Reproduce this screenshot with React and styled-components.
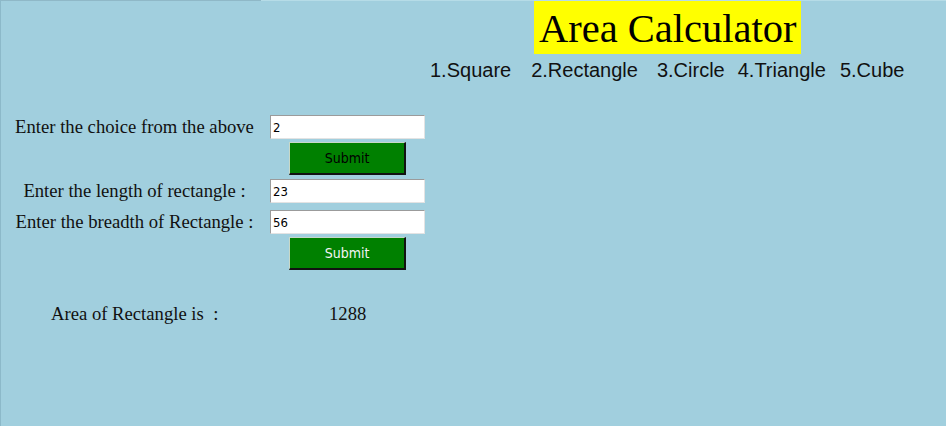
import React from "react";
import styled, { createGlobalStyle } from "styled-components";

const GlobalStyle = createGlobalStyle`
  html, body {
    margin: 0;
    padding: 0;
  }
  body {
    font-family: "Liberation Serif", "Times New Roman", serif;
    background: #a1cfde;
  }
`;

const Page = styled.div`
  min-height: 100vh;
  box-sizing: border-box;
  border-left: 1px solid #8cb9c9;
  background:
    linear-gradient(to right, #8fb8c7 260px, #b6dce7 260px) top left / 100% 1px no-repeat,
    #a1cfde;
  padding-top: 1px;
`;

const Header = styled.header`
  display: flex;
  flex-direction: column;
`;

const Title = styled.h1`
  align-self: flex-start;
  margin: 0 0 0 533px;
  padding: 0 4px 0 5px;
  height: 53px;
  line-height: 55px;
  background: #ffff00;
  color: #000;
  font-family: "Liberation Serif", "Times New Roman", serif;
  font-weight: normal;
  font-size: 40.5px;
`;

const Menu = styled.div`
  display: flex;
  margin: 5px 0 0 429px;
  font-family: "Liberation Sans", Arial, sans-serif;
  font-size: 20px;
  line-height: 23px;
  color: #111;
`;

const MenuItem = styled.span`
  margin-right: ${(p) => p.$gap || 0}px;
  white-space: nowrap;
`;

const Form = styled.form`
  display: flex;
  flex-direction: column;
  margin-top: 33px;
  padding-left: 6px;
`;

const Row = styled.div`
  display: grid;
  grid-template-columns: 255px 155px;
  column-gap: 8px;
  align-items: center;
  margin-top: ${(p) => p.$mt || 0}px;
`;

const Label = styled.label`
  text-align: center;
  font-size: 18.67px;
  color: #111;
  white-space: pre;
`;

const Input = styled.input`
  grid-column: 2;
  box-sizing: border-box;
  width: 155px;
  height: 24px;
  margin: 0;
  padding: 0 2px;
  background: #fff;
  border-style: solid;
  border-width: 1px;
  border-color: #9b9b9b #e3e3e3 #e3e3e3 #9b9b9b;
  font-family: "DejaVu Sans Condensed", "DejaVu Sans", sans-serif;
  font-size: 13px;
  color: #000;
  outline: none;
`;

const Button = styled.button`
  grid-column: 2;
  justify-self: start;
  box-sizing: border-box;
  width: 117px;
  height: 33px;
  margin: 0 0 0 19px;
  padding: 0;
  background: #008000;
  border-style: solid;
  border-width: 1px 2px 2px 1px;
  border-color: #c8d8c8 #111 #111 #c8d8c8;
  color: ${(p) => (p.$light ? "#f4f4f4" : "#000")};
  font-family: "DejaVu Sans Condensed", "DejaVu Sans", sans-serif;
  font-size: 14px;
  cursor: pointer;
`;

const Result = styled.div`
  display: flex;
  margin: 33px 0 0 50px;
  font-size: 18.67px;
  line-height: 21px;
  color: #111;
`;

const ResultLabel = styled.span`
  width: 278px;
  white-space: pre;
`;

const menu = [
  { text: "1.Square", gap: 20 },
  { text: "2.Rectangle", gap: 19 },
  { text: "3.Circle", gap: 13 },
  { text: "4.Triangle", gap: 14 },
  { text: "5.Cube", gap: 0 },
];

export default function App() {
  return (
    <Page>
      <GlobalStyle />
      <Header>
        <Title>Area Calculator</Title>
        <Menu>
          {menu.map((m) => (
            <MenuItem key={m.text} $gap={m.gap}>
              {m.text}
            </MenuItem>
          ))}
        </Menu>
      </Header>
      <Form onSubmit={(e) => e.preventDefault()}>
        <Row>
          <Label>Enter the choice from the above</Label>
          <Input type="text" defaultValue="2" />
        </Row>
        <Row $mt={3}>
          <Button type="submit">Submit</Button>
        </Row>
        <Row $mt={4}>
          <Label>Enter the length of rectangle :</Label>
          <Input type="text" defaultValue="23" />
        </Row>
        <Row $mt={7}>
          <Label>Enter the breadth of Rectangle :</Label>
          <Input type="text" defaultValue="56" />
        </Row>
        <Row $mt={3}>
          <Button type="submit" $light>
            Submit
          </Button>
        </Row>
      </Form>
      <Result>
        <ResultLabel>Area of Rectangle is  :</ResultLabel>
        <span>1288</span>
      </Result>
    </Page>
  );
}
